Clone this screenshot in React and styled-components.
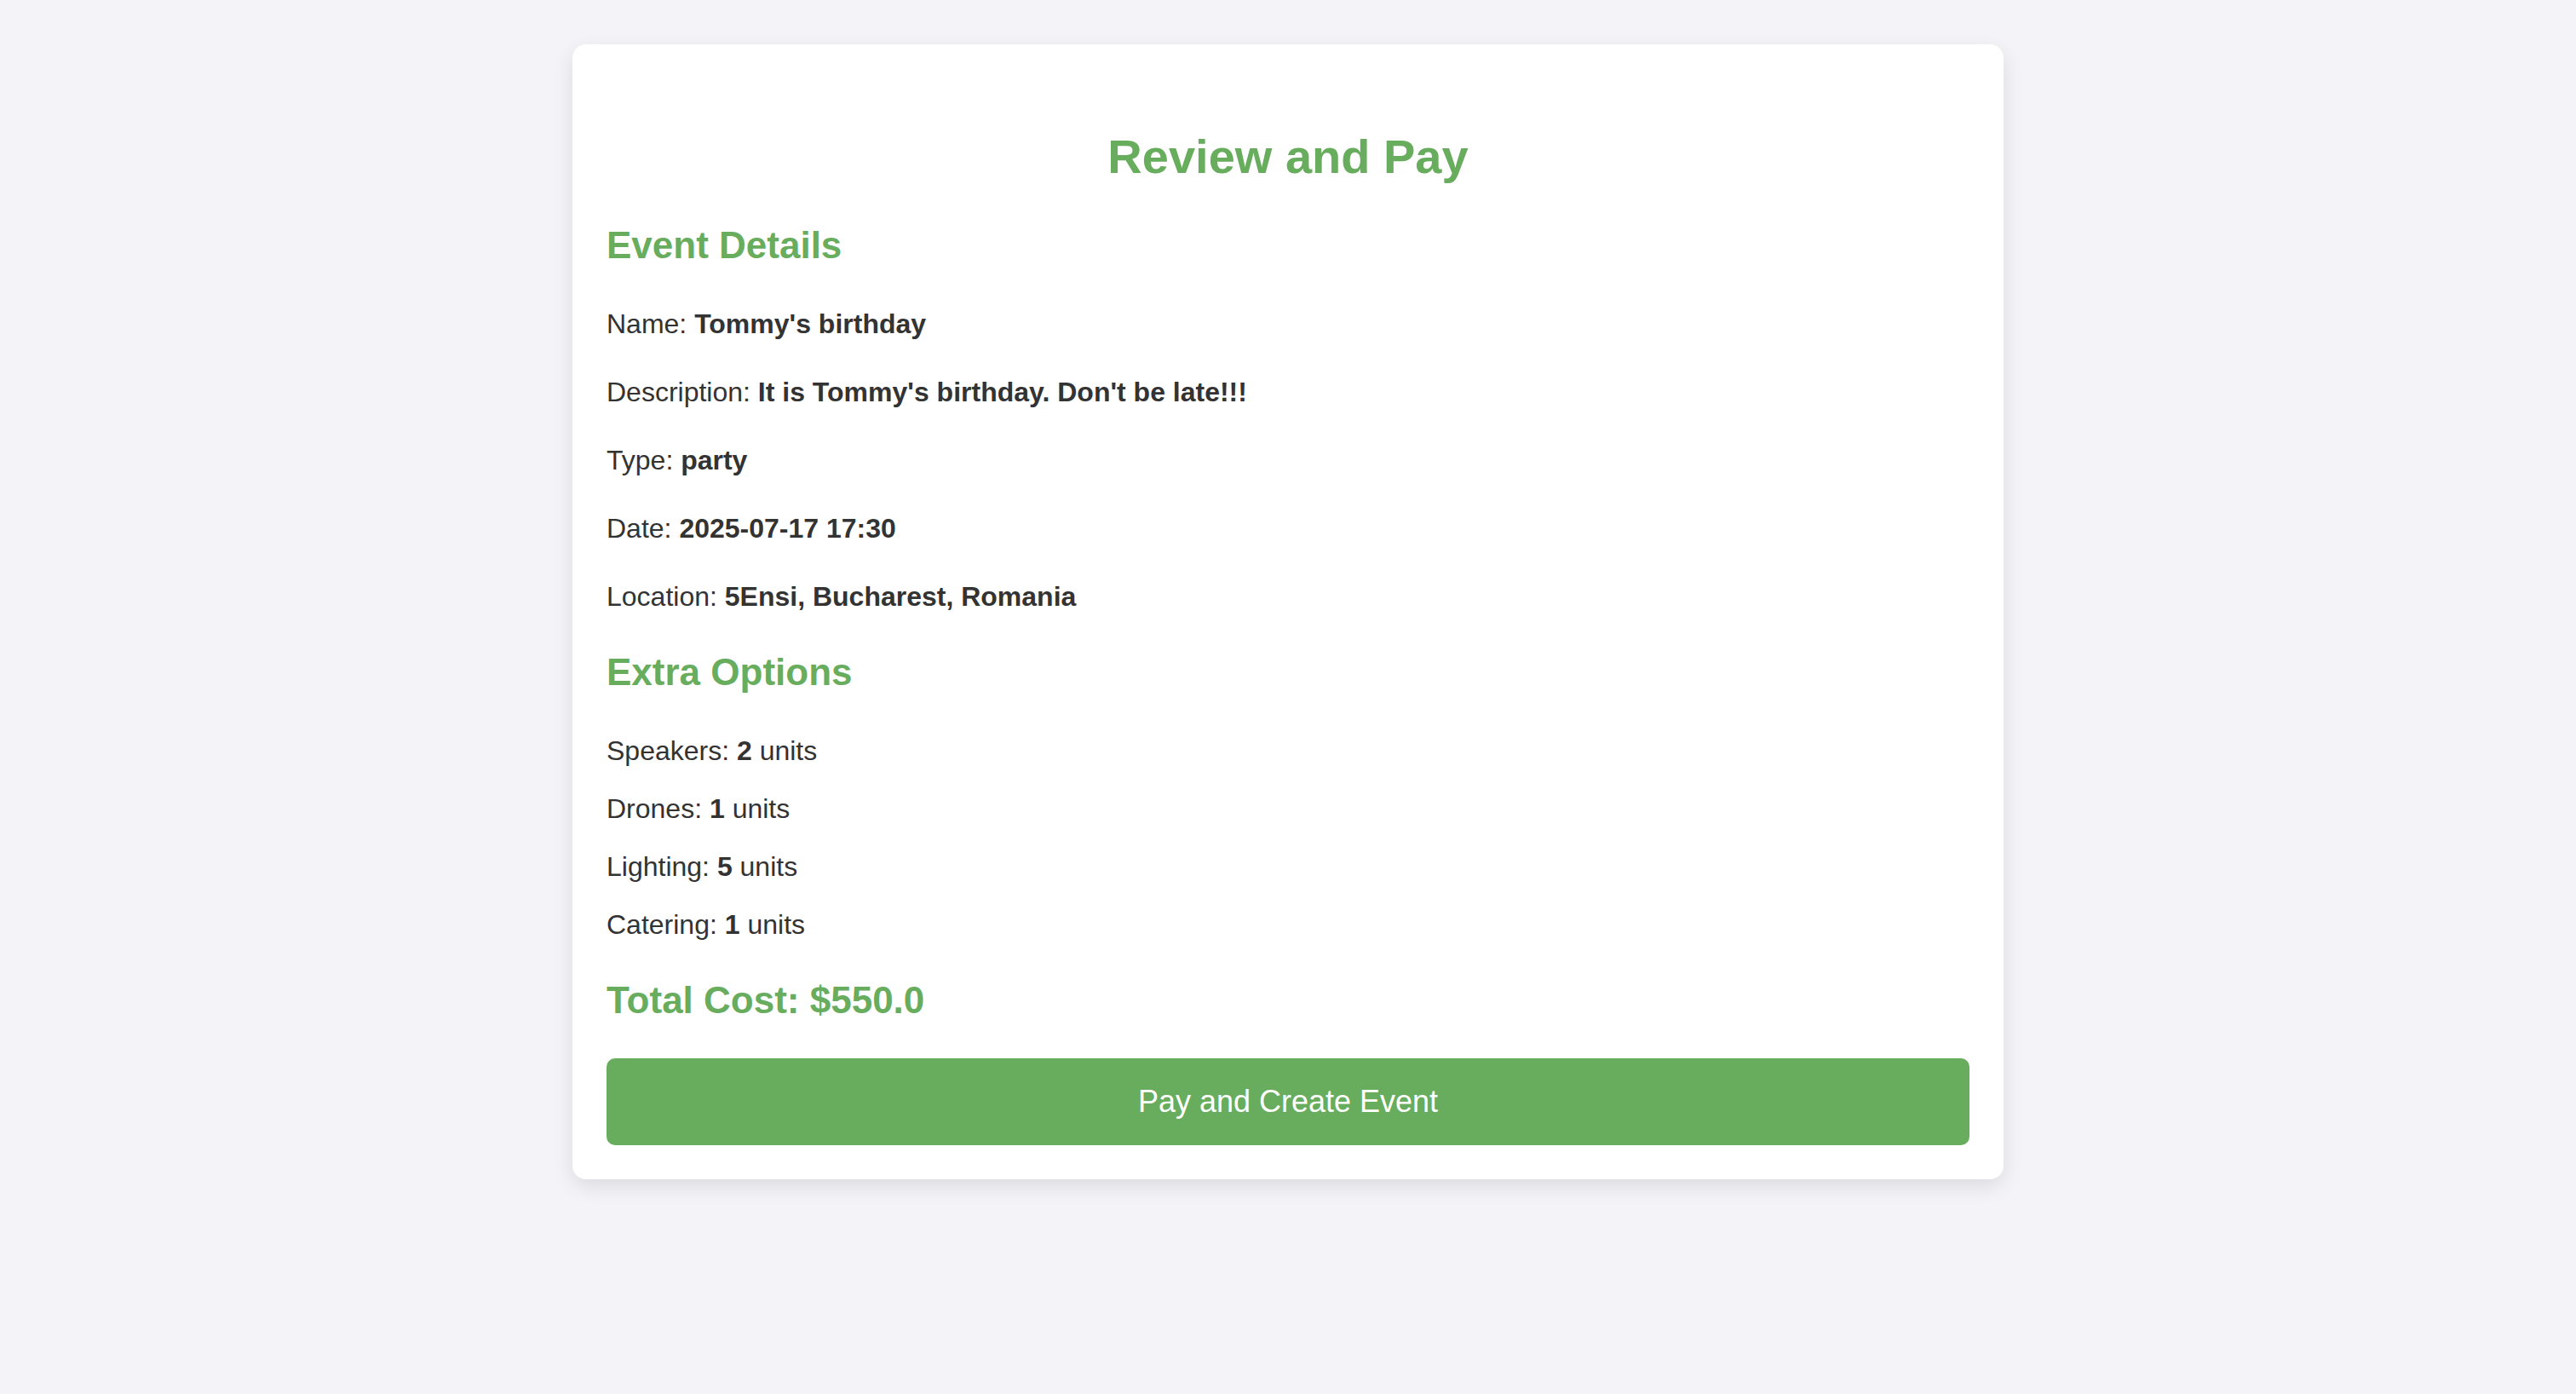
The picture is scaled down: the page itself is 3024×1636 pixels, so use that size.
import React from "react";
import styled, { createGlobalStyle } from "styled-components";

const GlobalStyle = createGlobalStyle`
  html, body {
    margin: 0;
    padding: 0;
    background: #f4f4f8;
    font-family: "Liberation Sans", Arial, Helvetica, sans-serif;
    color: #333333;
    overflow: hidden;
  }
`;

const green = "#68ad5d";

const Page = styled.div`
  display: flex;
  justify-content: center;
  align-items: flex-start;
  padding-top: 52px;
  height: 100vh;
  box-sizing: border-box;
`;

const Card = styled.div`
  width: 1680px;
  box-sizing: border-box;
  padding: 40px;
  background: #ffffff;
  border-radius: 16px;
  box-shadow: 0 8px 24px rgba(0, 0, 0, 0.1);
  display: flex;
  flex-direction: column;
`;

const Title = styled.h1`
  margin: 60px 0 46px;
  font-size: 56px;
  line-height: 64px;
  font-weight: bold;
  text-align: center;
  color: ${green};
`;

const SectionTitle = styled.h2`
  margin: ${(p) => (p.$first ? "0" : "39px")} 0 42px;
  font-size: 44px;
  line-height: 52px;
  font-weight: bold;
  color: ${green};
`;

const Rows = styled.div`
  display: flex;
  flex-direction: column;
  gap: ${(p) => p.$gap}px;
`;

const Row = styled.p`
  margin: 0;
  font-size: 32px;
  line-height: 48px;
  color: #333333;

  strong {
    font-weight: bold;
  }
`;

const Total = styled.h2`
  margin: 39px 0 42px;
  font-size: 44px;
  line-height: 52px;
  font-weight: bold;
  color: ${green};
`;

const PayButton = styled.button`
  width: 100%;
  padding: 30px 0;
  border: none;
  border-radius: 10px;
  background: ${green};
  color: #ffffff;
  font-family: "Liberation Sans", Arial, Helvetica, sans-serif;
  font-size: 36px;
  line-height: 42px;
  cursor: pointer;
`;

const details = [
  ["Name", "Tommy's birthday"],
  ["Description", "It is Tommy's birthday. Don't be late!!!"],
  ["Type", "party"],
  ["Date", "2025-07-17 17:30"],
  ["Location", "5Ensi, Bucharest, Romania"],
];

const extras = [
  ["Speakers", 2],
  ["Drones", 1],
  ["Lighting", 5],
  ["Catering", 1],
];

export default function App() {
  return (
    <>
      <GlobalStyle />
      <Page>
        <Card>
          <Title>Review and Pay</Title>

          <SectionTitle $first>Event Details</SectionTitle>
          <Rows $gap={32}>
            {details.map(([label, value]) => (
              <Row key={label}>
                {label}: <strong>{value}</strong>
              </Row>
            ))}
          </Rows>

          <SectionTitle>Extra Options</SectionTitle>
          <Rows $gap={20}>
            {extras.map(([label, qty]) => (
              <Row key={label}>
                {label}: <strong>{qty}</strong> units
              </Row>
            ))}
          </Rows>

          <Total>Total Cost: $550.0</Total>
          <PayButton>Pay and Create Event</PayButton>
        </Card>
      </Page>
    </>
  );
}
